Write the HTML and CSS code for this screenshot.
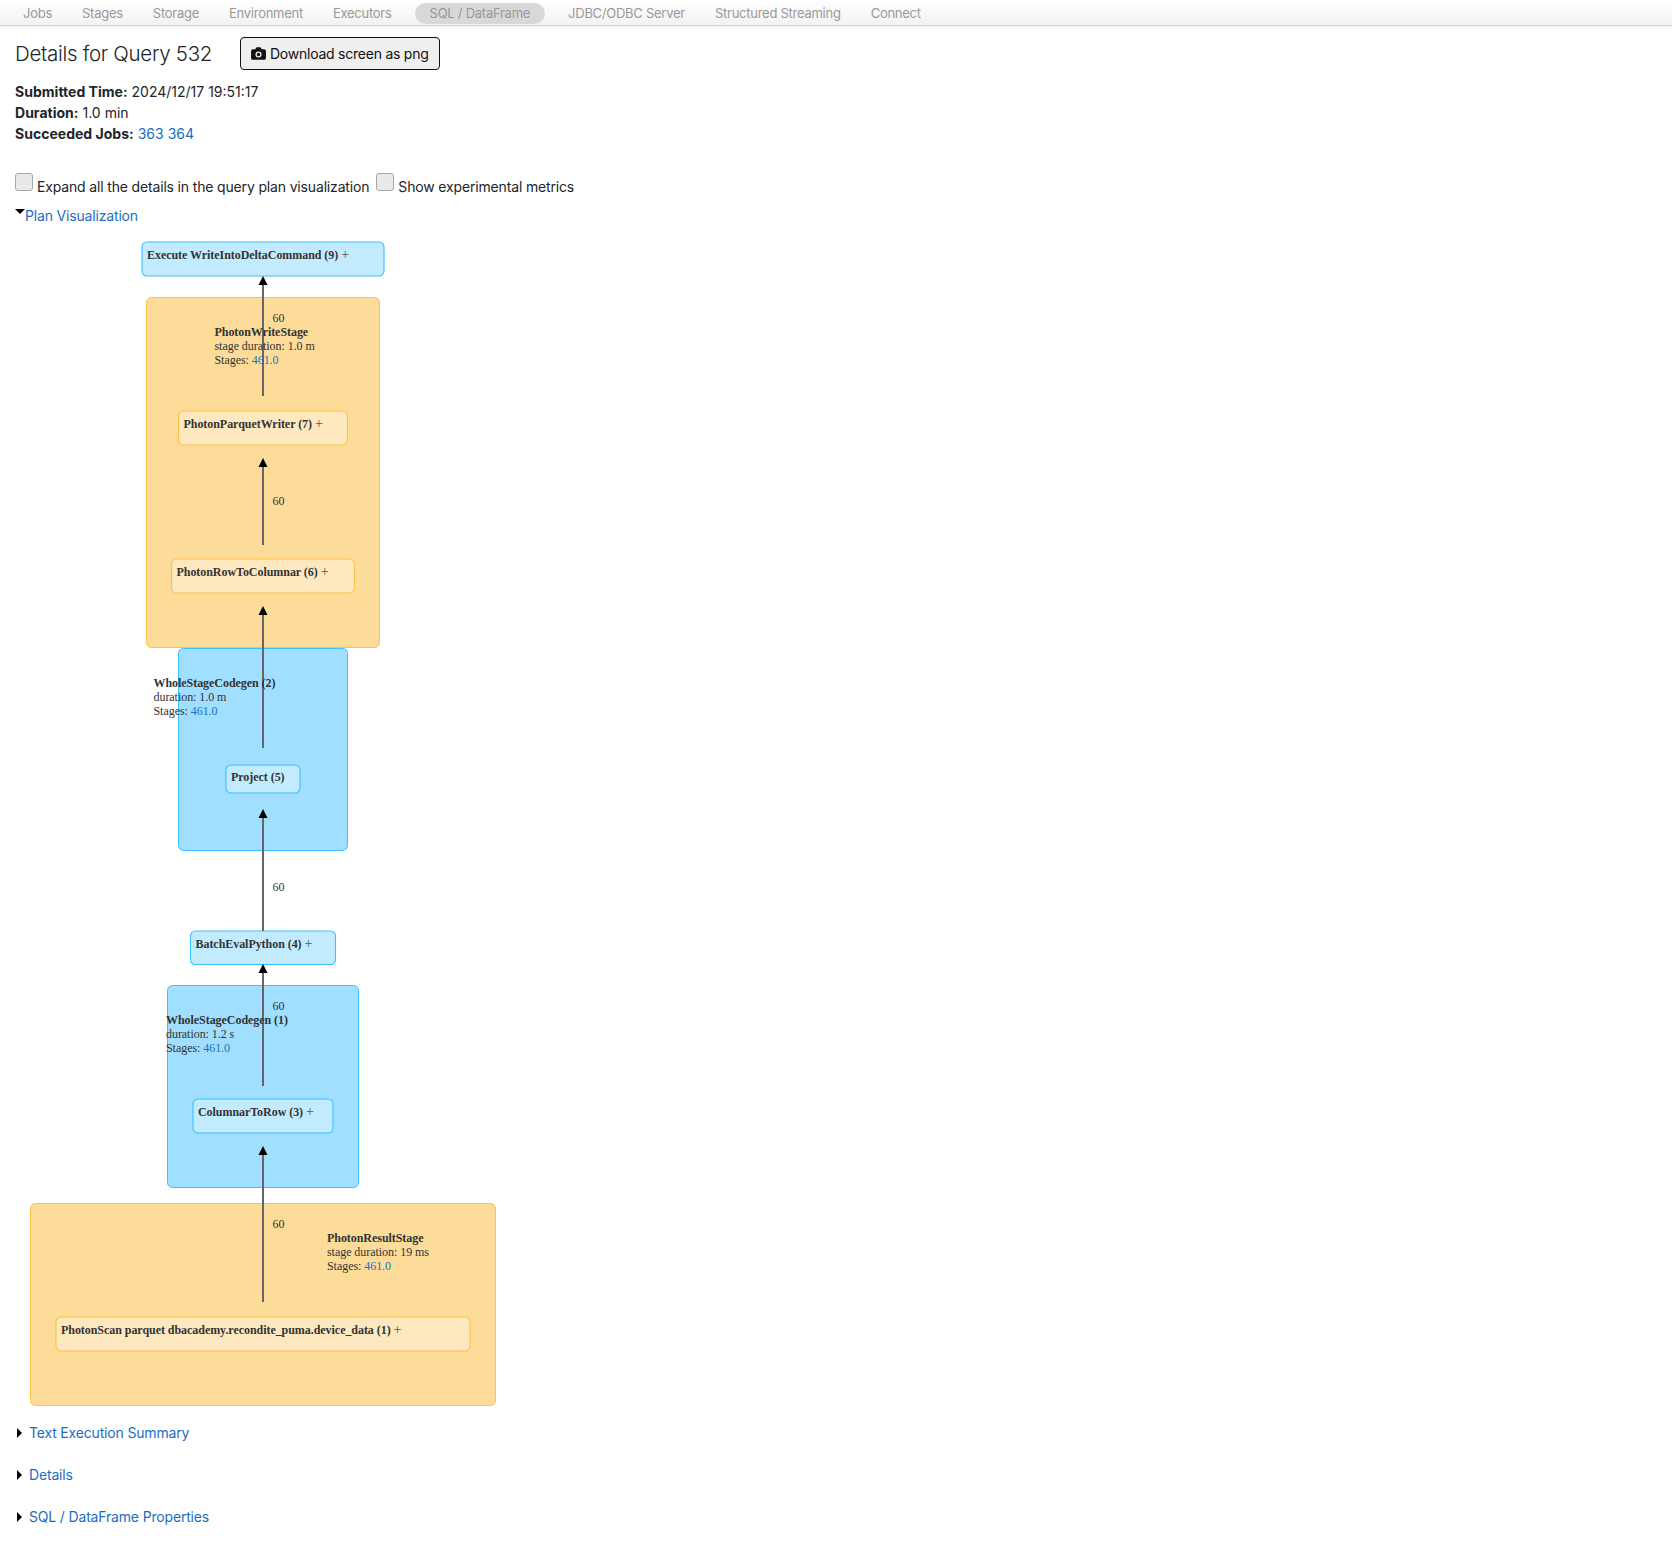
FILE: index.html
```html
<!DOCTYPE html>
<html lang="en">
<head>
<meta charset="utf-8">
<title>Details for Query 532</title>
<link rel="stylesheet" href="styles.css">
</head>
<body>
<nav class="navbar">
  <a class="nav-link">Jobs</a>
  <a class="nav-link">Stages</a>
  <a class="nav-link">Storage</a>
  <a class="nav-link">Environment</a>
  <a class="nav-link">Executors</a>
  <a class="nav-link active">SQL / DataFrame</a>
  <a class="nav-link">JDBC/ODBC Server</a>
  <a class="nav-link">Structured Streaming</a>
  <a class="nav-link">Connect</a>
</nav>
<main class="container">
  <div class="title-row">
    <h3 class="title">Details for Query 532</h3>
    <button class="download">
      <svg class="camera" viewBox="0 0 16 14" aria-hidden="true"><path fill-rule="evenodd" d="M5.2 1.2 4.6 2.4H2A2 2 0 0 0 0 4.4v7.4a2 2 0 0 0 2 2h12a2 2 0 0 0 2-2V4.400a2 2 0 0 0-2-2h-2.600l-.6-1.200A1.400 1.400 0 0 0 9.600.4H6.400a1.400 1.400 0 0 0-1.200.8ZM8 4.800a3.300 3.300 0 1 1 0 6.600 3.300 3.300 0 0 1 0-6.600Zm0 1.400a1.900 1.900 0 1 0 0 3.800 1.900 1.900 0 0 0 0-3.800Z"/></svg>
      <span>Download screen as png</span>
    </button>
  </div>
  <ul class="summary">
    <li><strong>Submitted Time:</strong> 2024/12/17 19:51:17</li>
    <li><strong>Duration:</strong> 1.0 min</li>
    <li><strong>Succeeded Jobs:</strong> <a class="link">363</a> <a class="link">364</a></li>
  </ul>
  <div class="options">
    <label class="option"><span class="checkbox"></span>Expand all the details in the query plan visualization</label>
    <label class="option"><span class="checkbox"></span>Show experimental metrics</label>
  </div>
  <div class="plan-head"><span class="tri-down"></span><a class="link section-link">Plan Visualization</a></div>
  <svg class="graph" viewBox="15 225 500 1190" width="500" height="1190">
    <rect class="cluster orange" x="146.500" y="296.500" width="233" height="350" rx="5"/>
    <rect class="cluster blue" x="178.500" y="647.500" width="169" height="202" rx="5"/>
    <rect class="cluster blue" x="167.500" y="984.500" width="191" height="202" rx="5"/>
    <rect class="cluster orange" x="30.500" y="1202.500" width="465" height="202" rx="5"/>

    <rect class="node blue-node" x="142" y="241" width="242" height="34" rx="5"/>
    <rect class="node orange-node" x="178.500" y="410" width="169" height="34" rx="5"/>
    <rect class="node orange-node" x="171.500" y="558" width="183" height="34" rx="5"/>
    <rect class="node blue-node" x="226" y="764" width="74" height="28" rx="5"/>
    <rect class="node blue-node" x="190.500" y="930" width="145" height="33.500" rx="5"/>
    <rect class="node blue-node" x="193" y="1098" width="140" height="34" rx="5"/>
    <rect class="node orange-node" x="56" y="1316" width="414" height="34" rx="5"/>

    <line class="edge" x1="263" y1="280" x2="263" y2="395"/>
    <line class="edge" x1="263" y1="463" x2="263" y2="544"/>
    <line class="edge" x1="263" y1="611" x2="263" y2="747"/>
    <line class="edge" x1="263" y1="813" x2="263" y2="930"/>
    <line class="edge" x1="263" y1="968" x2="263" y2="1085"/>
    <line class="edge" x1="263" y1="1150" x2="263" y2="1301"/>
    <polygon class="head" points="263,275 258.500,284 267.500,284"/>
    <polygon class="head" points="263,457 258.500,466 267.500,466"/>
    <polygon class="head" points="263,605 258.500,614 267.500,614"/>
    <polygon class="head" points="263,808 258.500,817 267.500,817"/>
    <polygon class="head" points="263,963 258.500,972 267.500,972"/>
    <polygon class="head" points="263,1145 258.500,1154 267.500,1154"/>

    <text class="edge-label" x="272.500" y="321">60</text>
    <text class="edge-label" x="272.500" y="504">60</text>
    <text class="edge-label" x="272.500" y="890">60</text>
    <text class="edge-label" x="272.500" y="1009">60</text>
    <text class="edge-label" x="272.500" y="1227">60</text>

    <text class="label" x="147" y="258"><tspan class="bold">Execute WriteIntoDeltaCommand (9)</tspan> <tspan class="plus">+</tspan></text>
    <text class="label" x="183.500" y="427"><tspan class="bold">PhotonParquetWriter (7)</tspan> <tspan class="plus">+</tspan></text>
    <text class="label" x="176.500" y="575"><tspan class="bold">PhotonRowToColumnar (6)</tspan> <tspan class="plus">+</tspan></text>
    <text class="label" x="231" y="780"><tspan class="bold">Project (5)</tspan></text>
    <text class="label" x="195.500" y="947"><tspan class="bold">BatchEvalPython (4)</tspan> <tspan class="plus">+</tspan></text>
    <text class="label" x="198" y="1115"><tspan class="bold">ColumnarToRow (3)</tspan> <tspan class="plus">+</tspan></text>
    <text class="label" x="61" y="1333"><tspan class="bold">PhotonScan parquet dbacademy.recondite_puma.device_data (1)</tspan> <tspan class="plus">+</tspan></text>

    <text class="label" x="214.500" y="335"><tspan class="bold">PhotonWriteStage</tspan></text>
    <text class="label" x="214.500" y="349">stage duration: 1.0 m</text>
    <text class="label" x="214.500" y="363">Stages: <tspan class="glink">461.0</tspan></text>

    <text class="label" x="153.500" y="686"><tspan class="bold">WholeStageCodegen (2)</tspan></text>
    <text class="label" x="153.500" y="700">duration: 1.0 m</text>
    <text class="label" x="153.500" y="714">Stages: <tspan class="glink">461.0</tspan></text>

    <text class="label" x="166" y="1023"><tspan class="bold">WholeStageCodegen (1)</tspan></text>
    <text class="label" x="166" y="1037">duration: 1.2 s</text>
    <text class="label" x="166" y="1051">Stages: <tspan class="glink">461.0</tspan></text>

    <text class="label" x="327" y="1241"><tspan class="bold">PhotonResultStage</tspan></text>
    <text class="label" x="327" y="1255">stage duration: 19 ms</text>
    <text class="label" x="327" y="1269">Stages: <tspan class="glink">461.0</tspan></text>
  </svg>
  <div class="collapsed"><span class="tri-right"></span><a class="link section-link">Text Execution Summary</a></div>
  <div class="collapsed"><span class="tri-right"></span><a class="link section-link">Details</a></div>
  <div class="collapsed"><span class="tri-right"></span><a class="link section-link">SQL / DataFrame Properties</a></div>
</main>
</body>
</html>
```
FILE: styles.css
```css
* { box-sizing: border-box; }
html, body { margin: 0; padding: 0; background: #fff; }
body {
  font-family: Inter, "Liberation Sans", sans-serif;
  font-size: 14px;
  line-height: 21px;
  color: #212529;
}
.navbar {
  display: flex;
  align-items: center;
  height: 26px;
  padding: 1px 0 0 8px;
  background: linear-gradient(to bottom, #fff, #f2f2f2);
  border-bottom: 1px solid #d4d4d4;
  box-shadow: 0 1px 4px rgba(0,0,0,.08);
}
.nav-link {
  padding: 0 15px;
  height: 21px;
  line-height: 21px;
  border-radius: 11px;
  color: #999;
  font-size: 13px;
  letter-spacing: -.26px;
  white-space: nowrap;
}
.nav-link.active { background: #d8d8d8; margin: 0 8px; }
.container { padding: 0 15px; }
.title-row { display: flex; align-items: center; height: 33px; margin-top: 11px; }
.title { margin: 0; font-size: 20.500px; font-weight: 300; line-height: 33px; letter-spacing: -.3px; color: #212529; width: 225px; }
.download {
  display: flex;
  align-items: center;
  gap: 4px;
  width: 200px;
  height: 33px;
  padding: 0 10px;
  font: 14px Inter, "Liberation Sans", sans-serif;
  letter-spacing: -.24px;
  white-space: nowrap;
  color: #111;
  background: #efefef;
  border: 1px solid #111;
  border-radius: 4px;
}
.camera { width: 15px; height: 13px; fill: #111; flex: none; }
.summary { list-style: none; margin: 11px 0 0; padding: 0; }
.summary strong { font-weight: 700; letter-spacing: .02px; }
.link { color: #1b6ec2; text-decoration: none; }
.section-link { letter-spacing: -.17px; }
.options { display: flex; height: 21px; margin-top: 32px; align-items: flex-end; gap: 7px; letter-spacing: -.16px; }
.option { display: flex; align-items: flex-end; }
.checkbox {
  width: 18px;
  height: 18px;
  margin-right: 4px;
  margin-bottom: 6px;
  background: #e9e9e9;
  border: 1px solid #a8a8a8;
  border-radius: 3px;
}
.plan-head { display: flex; margin-top: 8px; height: 21px; line-height: 21px; }
.tri-down {
  width: 0;
  height: 0;
  margin-top: 4px;
  border-left: 5px solid transparent;
  border-right: 5px solid transparent;
  border-top: 5px solid #000;
}
.graph { display: block; }
.cluster { stroke-width: 1; }
.node { stroke-width: 1.100; }
.orange { fill: #fddc9a; stroke: #ffc046; }
.blue { fill: #a0dfff; stroke: #3ec0ff; }
.orange-node { fill: #fee8c0; stroke: #ffc046; }
.blue-node { fill: #c3ebff; stroke: #3ec0ff; }
.edge { stroke: #666; stroke-width: 2; }
.head { fill: #000; }
.label, .edge-label {
  font-family: "Liberation Serif", serif;
  font-size: 12px;
  letter-spacing: -.05px;
  fill: #333;
}
.bold { font-weight: 700; }
.plus { font-size: 14px; fill: #555; }
.glink { fill: #1b6ec2; }
.collapsed { display: flex; align-items: center; height: 21px; margin-top: 21px; }
.graph + .collapsed { margin-top: 6px; }
.tri-right {
  width: 0;
  height: 0;
  margin: 0 7px 0 2px;
  border-top: 5px solid transparent;
  border-bottom: 5px solid transparent;
  border-left: 5px solid #000;
}
```
